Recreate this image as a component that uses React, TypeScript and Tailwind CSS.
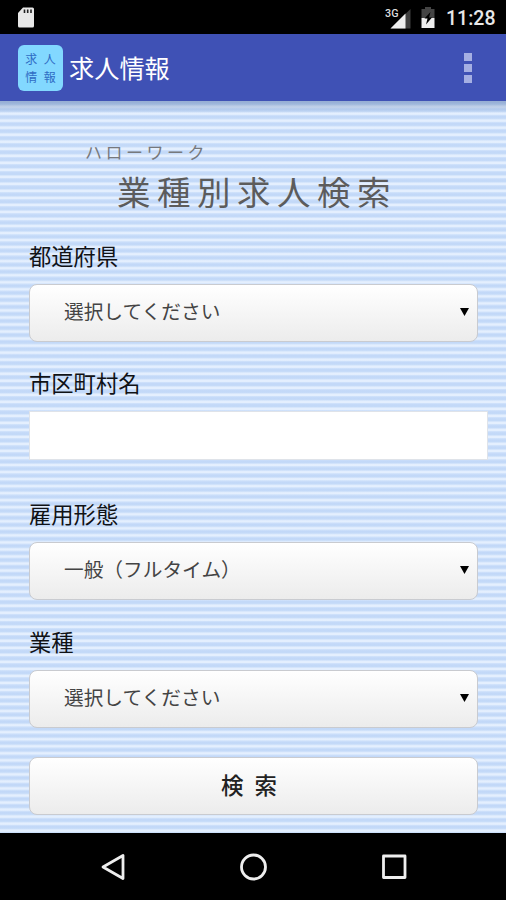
import React from "react";

function StatusBar() {
  return (
    <div className="flex h-[34px] items-center bg-black pl-[17px] pr-[10px]">
      <svg className="h-[22px] w-[18px]" viewBox="0 0 18 22">
        <path d="M6 1.500h9.500a1.500 1.500 0 0 1 1.500 1.500v17a1.500 1.500 0 0 1-1.500 1.500h-13A1.500 1.500 0 0 1 1 20V7z" fill="#e8e8e8" />
        <path d="M7.500 3.500v3.500M10.700 3.500v3.500M14 3.500v3.500" stroke="#222" strokeWidth="1.600" />
      </svg>
      <div className="ml-auto flex items-center pt-[1px]">
        <svg className="h-[26px] w-[28px]" viewBox="0 0 28 26">
          <path d="M25.500 4v19.500h-20z" fill="#3f3f3f" />
          <path d="M20.500 8.500v15H5.500z" fill="#eee" />
          <text x="0" y="12" fill="#ddd" fontSize="11.500" fontWeight="500" textLength="13.500" lengthAdjust="spacingAndGlyphs" className="font-['Roboto',sans-serif]">3G</text>
        </svg>
        <svg className="ml-[7px] h-[22px] w-[16px]" viewBox="0 0 16 22">
          <path d="M5 0h6v2h3.500v9h-13V2H5z" fill="#444" />
          <path d="M1.500 11h13v10h-13z" fill="#eee" />
          <path d="M10.500 5L4.500 11.500h3L6 17.500l6-7H9z" fill="#000" />
        </svg>
        <span className="ml-[10px] w-[50px] whitespace-nowrap pt-[2px] text-[19.500px] font-medium leading-none text-[#e8e8e8] font-['Roboto',sans-serif]">11:28</span>
      </div>
    </div>
  );
}

function AppBar() {
  return (
    <header className="flex h-[67px] items-center bg-[#3f51b5] pl-[18px] pr-[34px]">
      <div className="grid h-[46px] w-[45px] grid-cols-2 content-center justify-items-center gap-y-[4px] rounded-[6px] bg-[#82d8ff] px-[4px] text-[12px] leading-[14px] text-[#2f6cc4]">
        <span>求</span><span>人</span><span>情</span><span>報</span>
      </div>
      <h1 className="ml-[6px] text-[25.200px] font-normal leading-none text-white">求人情報</h1>
      <div className="ml-auto flex flex-col gap-[3px]">
        <i className="size-[8px] bg-[#a5afe3]" />
        <i className="size-[8px] bg-[#a5afe3]" />
        <i className="size-[8px] bg-[#a5afe3]" />
      </div>
    </header>
  );
}

function Label({ children }: { children: React.ReactNode }) {
  return <div className="h-[43px] text-[22.300px] leading-[28px] text-[#101216]">{children}</div>;
}

function SelectBox({ value }: { value: string }) {
  return (
    <div className="flex h-[58px] w-[449px] items-center justify-between rounded-[8px] border border-[#c9cbd0] bg-linear-to-b from-white to-[#ececec] pl-[34px] pr-[8px]">
      <span className="pb-[4px] text-[19.700px] leading-[28px] text-[#444]">{value}</span>
      <svg className="mb-[2px] h-[8px] w-[9px]" viewBox="0 0 9 8"><path d="M0 0h9L4.500 8z" fill="#000" /></svg>
    </div>
  );
}

export default function App() {
  return (
    <div className="flex h-[900px] w-[506px] flex-col overflow-hidden font-['Noto_Sans_CJK_JP',sans-serif]">
      <StatusBar />
      <AppBar />
      <main className="relative h-[732px] bg-[repeating-linear-gradient(to_bottom,#d0e2fb_0px,#c2d8f8_1.500px,#c4daf8_3.200px,#e4effe_5px,#e4effe_6.300px,#d0e2fb_7.030px)] pl-[29px]">
        <div className="absolute inset-x-0 top-0 h-[12px] bg-linear-to-b from-[#7f98c2]/70 to-transparent" />
        <div className="h-[139px] pt-[39px] text-[#5c5c5c]">
          <div className="pl-[56px] text-[17px] leading-[24px] tracking-[3.500px] text-[#77797d]">ハローワーク</div>
          <div className="pl-[88px] pt-[5px] text-[33.500px] leading-[44px] tracking-[6.500px]">業種別求人検索</div>
        </div>
        <section className="h-[127px] pt-[1px]">
          <Label>都道府県</Label>
          <SelectBox value="選択してください" />
        </section>
        <section className="h-[132px] pt-[1px]">
          <Label>市区町村名</Label>
          <div className="h-[49px] w-[459px] border border-[#dfe3e9] bg-white" />
        </section>
        <section className="h-[128px]">
          <Label>雇用形態</Label>
          <SelectBox value="一般（フルタイム）" />
        </section>
        <section className="h-[130px]">
          <Label>業種</Label>
          <SelectBox value="選択してください" />
        </section>
        <button className="flex h-[58px] w-[449px] items-center justify-center gap-[11px] rounded-[8px] border border-[#c9cbd0] bg-linear-to-b from-white to-[#ececec] pb-[3px] pr-[9px] text-[22.500px] font-medium text-[#222]"><span>検</span><span>索</span></button>
      </main>
      <nav className="flex h-[67px] items-center bg-black pl-[100px]">
        <svg className="h-[30px] w-[310px]" viewBox="0 0 310 30" fill="none" stroke="#eee" strokeWidth="2.800" strokeLinejoin="round">
          <path d="M23 3.500v23L3 15z" />
          <circle cx="153.500" cy="15" r="12" />
          <path d="M283.500 4h21.500v21.500h-21.500z" />
        </svg>
      </nav>
    </div>
  );
}
